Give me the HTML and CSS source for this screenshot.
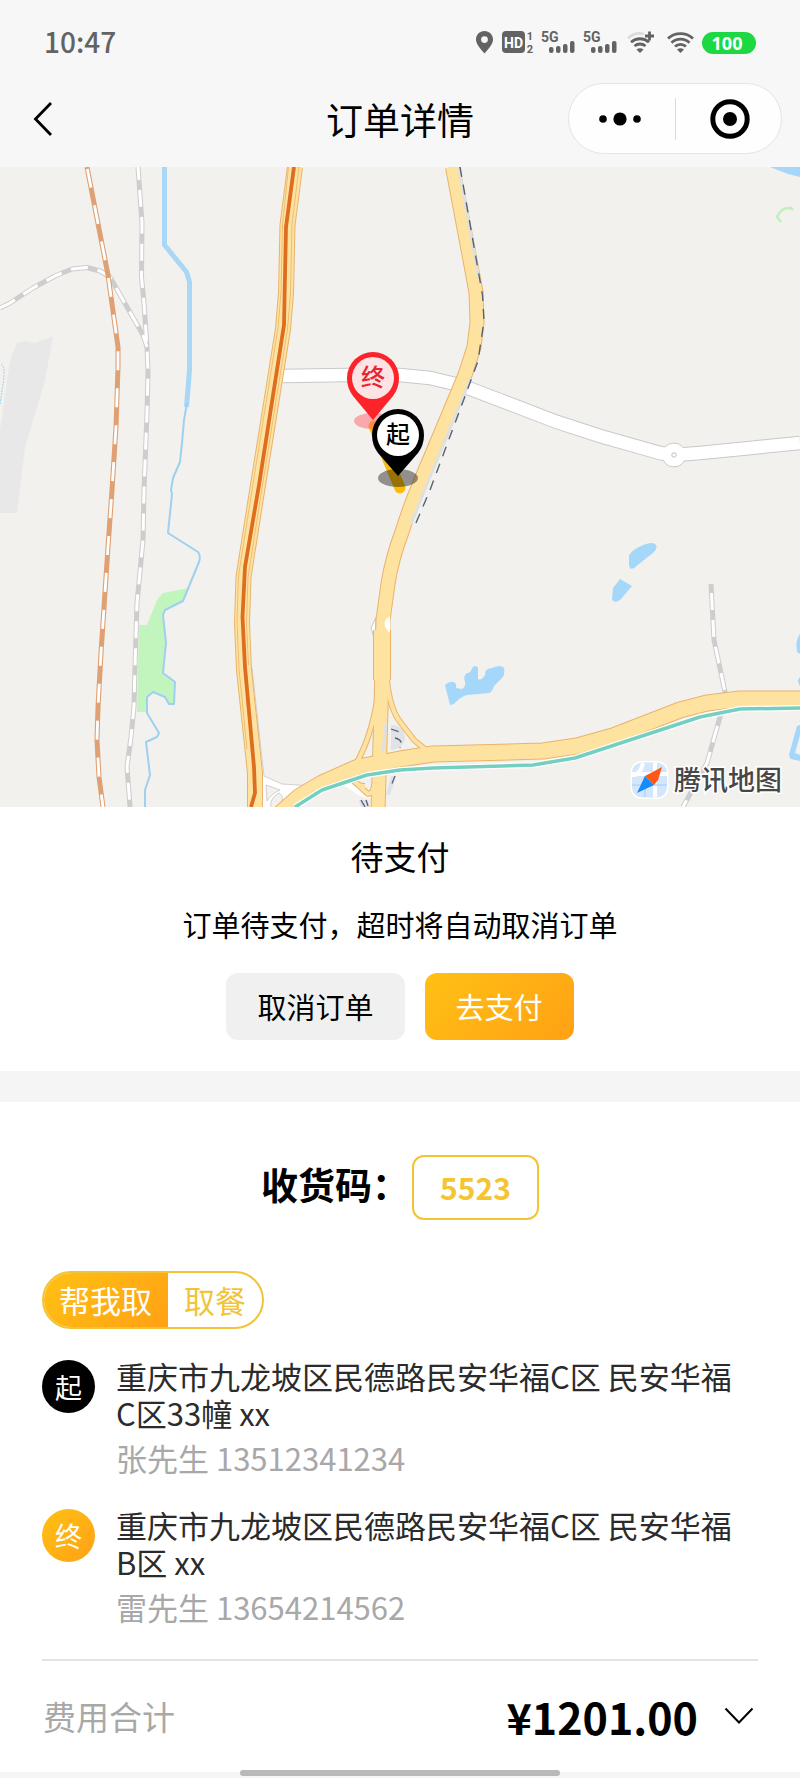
FILE: index.html
```
<!DOCTYPE html>
<html lang="zh-CN">
<head>
<meta charset="utf-8">
<meta name="viewport" content="width=device-width, initial-scale=1">
<title>订单详情</title>
<link rel="stylesheet" href="styles.css">
</head>
<body>
<div class="page">
  <div class="status-bar">
    <span class="clock">10:47</span>
    <svg class="status-icons" width="280" height="40" viewBox="476 23 280 40" aria-hidden="true">
      <g fill="#636363">
        <path fill-rule="evenodd" d="M484.500 31c-5 0-8.500 3.800-8.500 8.500 0 5 4.500 9 8.500 14 4-5 8.500-9 8.500-14 0-4.700-3.500-8.500-8.500-8.500zm0 5.200a3.400 3.400 0 1 1 0 6.800 3.400 3.400 0 0 1 0-6.800z"/>
        <rect x="502" y="31" width="23" height="22" rx="4"/>
        <text class="hd" x="513.500" y="47.500" text-anchor="middle">HD</text>
        <text class="sim" x="530" y="40" text-anchor="middle">1</text>
        <text class="sim" x="530" y="53" text-anchor="middle">2</text>
        <g id="signal">
          <text class="net" x="541" y="42">5G</text>
          <rect x="549" y="47" width="4.500" height="6" rx="2"/>
          <rect x="556" y="46" width="4.500" height="7" rx="2"/>
          <rect x="563" y="44" width="4.500" height="9" rx="2"/>
          <rect x="570" y="41" width="4.500" height="12" rx="2"/>
        </g>
        <use href="#signal" x="42"/>
      </g>
      <g fill="none" stroke="#636363" stroke-width="2.800">
        <path stroke="#dcdcdc" d="M628 38.500a17 17 0 0 1 16-4.500"/>
        <path d="M631 42.200a13.500 13.500 0 0 1 18 0M634.500 46a8.500 8.500 0 0 1 11 0M645 36h9M649.500 31.500v9"/>
        <path d="M668 38.500a18.500 18.500 0 0 1 25 0M671.500 42.700a13 13 0 0 1 18 0M675 46.500a8 8 0 0 1 11 0"/>
      </g>
      <path fill="#636363" d="M636.500 49.500q3.500-2.500 7 0l-3.500 3.500zM677 49.500q3.500-2.500 7 0l-3.500 3.500z"/>
      <rect x="702" y="32" width="54" height="22" rx="11" fill="#1cd842"/>
      <text class="battery" x="727" y="49.500" text-anchor="middle">100</text>
    </svg>
  </div>

  <header class="nav">
    <button class="back" aria-label="返回">
      <svg width="20" height="36" viewBox="0 0 20 36"><path d="M18 2 2.500 18 18 34" fill="none" stroke="#000" stroke-width="2.800"/></svg>
    </button>
    <h1 class="nav-title">订单详情</h1>
    <div class="capsule">
      <button class="capsule-btn" aria-label="更多">
        <svg width="44" height="16" viewBox="0 0 44 16"><circle cx="5" cy="8" r="3.800"/><circle cx="22" cy="8" r="6.600"/><circle cx="39" cy="8" r="3.800"/></svg>
      </button>
      <button class="capsule-btn" aria-label="关闭">
        <svg width="40" height="40" viewBox="0 0 40 40"><circle cx="20" cy="20" r="17.200" fill="none" stroke="#000" stroke-width="5"/><circle cx="20" cy="20" r="7"/></svg>
      </button>
    </div>
  </header>

  <svg class="map" viewBox="0 167 800 640" role="img" aria-label="配送路线地图">
    <rect y="167" width="800" height="640" fill="#f2f1ed"/>
    <path fill="#e9e8e9" d="M17 343l8-2 10 2 18-7-8 45-20 66-8 66H0v-83l10-70z"/>
    <path fill="#c2f4be" d="M189 588l-26 5-6 7-10 25h-8l-2 87h9l1-15 6-5 12 5 4 7h5l1-22-12-9 3-30-3-28 2-5 18-9z"/>
    <path fill="none" stroke="#a8d8f5" stroke-width="5" stroke-linejoin="round" d="M164.500 167v78l22 27 3 10v88l-3 37"/>
    <path fill="none" stroke="#9ed0f2" stroke-width="2" stroke-linejoin="round" d="M187 403l-3 17-2 23-2 19-7 16-2 12 1 4-4 39 30 19q3 4 1 10l-16 39-18 9-2 5 3 28-3 30 12 9-1 22h-5l-4-7-12-5-6 5v16l12 20-2 4-11 5 4 33-5 15v17"/>
    <path fill="none" stroke="#9ed0f2" stroke-dasharray="2 1" d="M1 364q5 4 2 20l-3 20"/>

    <g fill="none" stroke-linejoin="round">
      <g stroke="#cdcdcd" stroke-width="5">
        <path d="M0 308l10-5 23-15 22-12 17-7 15-1.500 13 3.500 10 6 13 23 20 35 4 12"/>
        <path d="M138 167l4 56-.5 54 2.500 26 3 44 1 26-1 40-3 77-1 50-6 63-2 64-1 40-3 30-4 30 3 40"/>
        <path d="M711 584l3 56 11 52-5 25-13 46-24 44"/>
      </g>
      <g stroke="#fff" stroke-width="3" stroke-dasharray="17 10">
        <path d="M0 308l10-5 23-15 22-12 17-7 15-1.500 13 3.500 10 6 13 23 20 35 4 12"/>
        <path stroke-dashoffset="4" d="M138 167l4 56-.5 54 2.500 26 3 44 1 26-1 40-3 77-1 50-6 63-2 64-1 40-3 30-4 30 3 40"/>
        <path stroke-dashoffset="18" d="M711 584l3 56 11 52-5 25-13 46-24 44"/>
      </g>
      <path stroke="#dfa073" stroke-width="5" d="M87 167l21 108 10 72v20l-2 60-4 63-4 57-7 106-3 54-1 33 2 37 4 30"/>
      <path stroke="#fff" stroke-width="2.800" stroke-dasharray="19 18" stroke-dashoffset="-2" d="M87 167l21 108 10 72v20l-2 60-4 63-4 57-7 106-3 54-1 33 2 37 4 30"/>
    </g>

    <g fill="#a5d7fb">
      <path d="M770 167h30v10l-12-3z"/>
      <path d="M629 557q0-5 10-10 14-7 17-2 3 4-7 11l-15 12q-5 3-5-5z"/>
      <path d="M613 588l7-9 12 7-11 13q-5 5-9 1z"/>
      <path d="M445 685q4-4 9-3 3 2 2 6l6 1q4-2 3-7-2-6 2-9 4 0 5-5 4-4 6 0v11q3 2 7-4 0-7 7-7 9-4 12 0 2 7-4 12l-6 6q-2 6-5 7l-22 2q-7 2-13 9l-4 1z"/>
      <path d="M800 634q-5 6-3 18l3 2zM800 677q-4 3 0 9zM797 726l3-1v10l-5 18 5 2v6l-9-2q-3-2-1-8z"/>
    </g>
    <path fill="none" stroke="#c2efc0" stroke-width="2.500" d="M781 222l-4-5q4-10 14-9l2 2"/>

    <path fill="none" stroke="#c9c9c9" stroke-width="14.500" d="M282 376l65-1h53l30 3 25 6 13 4 89 34 43 14 60 17 14 2 26-2 100-10"/>
    <circle cx="674" cy="455" r="12" fill="#fff" stroke="#c9c9c9"/>
    <path fill="none" stroke="#fff" stroke-width="12.500" d="M282 376l65-1h53l30 3 25 6 13 4 89 34 43 14 60 17 14 2 26-2 100-10"/>
    <circle cx="674" cy="455" r="2.200" fill="#fff" stroke="#bbb"/>

    <path fill="#fff" stroke="#d2d0d0" d="M249 668l3 0 12 108 18 8 32 2-28 24h-36z"/>
    <path fill="#f2f1ed" stroke="#d2d0d0" d="M266 785l14 5q-8 3-13 11zM271 808q-2-9 8-15 6 4 2 10l-5 5z"/>
    <path fill="#fff" stroke="#c9c9c9" d="M376 617l-5 11 4 13z"/>
    <path fill="none" stroke="#fff" stroke-width="6" d="M345 782l14 10q9 5 20 3"/>
    <path fill="#dfe2e6" d="M391 725q14 0 14 14-2 10-14 11zM391 776h5l-6 19h-4zM359 800h9l2 7h-9z"/>

    <g fill="none" stroke-linejoin="round">
      <g stroke="#e9b36c">
        <path stroke-width="16" d="M295 167l-7.500 58-1.500 68-3 36-25 156-14.500 92-1.500 46 2 47 11 103v36"/>
        <path stroke-width="15" d="M452.500 167l23.500 125 1 31-3 24-9 28-44 105q-12 29-19 52-10 26-14 52l-5 36-2 90-3 100"/>
        <path stroke-width="18" d="M382 630v50"/>
        <path stroke-width="17" d="M275 818l25-22 22-13 36-16 42-8 33-5 110-3 34-5 36-10 67-26 27-7 33-4h70"/>
        <path stroke-width="6" d="M377 700q-6 37-20 62M387 680q3 30 14 43l13 17 17 14M353 780l15 14q6-1 6-10M353 780q4 6 12 6"/>
      </g>
      <g stroke="#fee3a0">
        <path stroke-width="14" d="M295 167l-7.500 58-1.500 68-3 36-25 156-14.500 92-1.500 46 2 47 11 103v36"/>
        <path stroke-width="13" d="M452.500 167l23.500 125 1 31-3 24-9 28-44 105q-12 29-19 52-10 26-14 52l-5 36-2 90-3 100"/>
        <path stroke-width="16" d="M382 630v50"/>
        <path stroke-width="15" d="M275 818l25-22 22-13 36-16 42-8 33-5 110-3 34-5 36-10 67-26 27-7 33-4h70"/>
        <path stroke-width="4" d="M377 700q-6 37-20 62M387 680q3 30 14 43l13 17 17 14M353 780l15 14q6-1 6-10M353 780q4 6 12 6"/>
      </g>
      <path stroke="#dfe1df" stroke-width="3" d="M459 169l20 110M471 378l-48 116-12 30M386 723l-3 28"/>
      <path fill="#fff" stroke="none" d="M390 616q-11 7 0 17z"/>
      <path stroke="#e9b36c" stroke-width=".8" d="M288.500 167l-6 58-1.500 67-3 36-25 156-14.500 92-1.500 46 2 47 8 80M299 167l-7 58-1.500 68-3 36-25 156-14.500 92-1.500 46 2 42"/>
      <path stroke="#596275" stroke-width="1.400" stroke-dasharray="10 8" d="M460 167l22.500 128 1.500 26-6 40-14 38-34 91-17 40"/>
      <path stroke="#dd6d20" stroke-width="3.800" d="M294 167l-8 60-2 98-25 160-14 82-2.500 50 2.500 50 9 100 1 26-4 14"/>
      <path stroke="#596275" stroke-width="1.300" stroke-dasharray="8 5" d="M391 729l9 3M395 738q9 2 5 10M395 776l-4 10M361 800l4 7M366 800l2 6"/>
      <path stroke="#fff" stroke-width="6" d="M295 807l27-17 45-15 33-5 33-2 100-3 42-7 125-41 40-8 60-1"/>
      <path stroke="#75cfc0" stroke-width="3.500" d="M295 807l27-17 45-15 33-5 33-2 100-3 42-7 125-41 40-8 60-1"/>
      <path stroke="#f8bd0b" stroke-width="11" stroke-linecap="round" d="M374 426l26 62"/>
    </g>

    <ellipse cx="373" cy="421" rx="19" ry="8" fill="#ff5f6c" opacity=".5"/>
    <path fill="#fc232b" d="M373 420l-20-24q-6-8-6-18a26 26 0 0 1 52 0q0 10-6 18z"/>
    <circle cx="373" cy="378" r="21" fill="#fde3e4"/>
    <text class="pin" x="373" y="386" text-anchor="middle" fill="#e5262e">终</text>
    <ellipse cx="398" cy="478" rx="20" ry="9" opacity=".4"/>
    <path d="M398 476l-20-23q-6-8-6-18a26 26 0 0 1 52 0q0 10-6 18z"/>
    <circle cx="398" cy="435" r="21" fill="#fff"/>
    <text class="pin" x="398" y="443" text-anchor="middle">起</text>

    <rect x="630.500" y="761" width="38" height="38" rx="11" fill="#fff"/>
    <rect x="632" y="762.500" width="35" height="35" rx="10" fill="#d3e6fc"/>
    <path fill="none" stroke="#fff" stroke-width="4" d="M632 775q8 1 11-12M655 762.500v35M632 774h35"/>
    <path fill="none" stroke="#b4d5fa" stroke-width="1.500" d="M632 785h35M645 776v21"/>
    <path fill="#ff5719" d="M662 767l-17 9 9 9 4-5z"/>
    <path fill="#138cf7" d="M637 793l8-17 9 9z"/>
    <text class="map-brand" x="674" y="790">腾讯地图</text>
  </svg>

  <main>
    <section class="pay">
      <h2 class="pay-title">待支付</h2>
      <p class="pay-tip">订单待支付，超时将自动取消订单</p>
      <div class="pay-actions">
        <button class="btn btn-plain">取消订单</button>
        <button class="btn btn-primary">去支付</button>
      </div>
    </section>

    <section class="order">
      <div class="code-row">
        <span class="code-label">收货码：</span>
        <span class="code">5523</span>
      </div>
      <div class="tags"><span class="tag tag-fill">帮我取</span><span class="tag">取餐</span></div>
      <div class="stop">
        <span class="dot dot-start">起</span>
        <div class="stop-body">
          <p class="address">重庆市九龙坡区民德路民安华福C区 民安华福C区33幢 xx</p>
          <p class="contact">张先生 13512341234</p>
        </div>
      </div>
      <div class="stop">
        <span class="dot dot-end">终</span>
        <div class="stop-body">
          <p class="address">重庆市九龙坡区民德路民安华福C区 民安华福B区 xx</p>
          <p class="contact">雷先生 13654214562</p>
        </div>
      </div>
      <div class="total">
        <span class="total-label">费用合计</span>
        <button class="total-btn" aria-label="展开费用明细">
          <span>¥1201.00</span>
          <svg width="30" height="18" viewBox="0 0 30 18"><path d="M1.500 1.500 15 15.500 28.500 1.500" fill="none" stroke="#000" stroke-width="2"/></svg>
        </button>
      </div>
    </section>
  </main>
  <footer class="home"><div class="home-bar"></div></footer>
</div>
</body>
</html>
```

FILE: styles.css
```
* {
  box-sizing: border-box;
}

body,
h1,
h2,
p {
  margin: 0;
}

body {
  background: #f7f7f7;
  color: #000;
  font-family: "Noto Sans CJK SC", sans-serif;
}

button {
  padding: 0;
  border: 0;
  background: none;
  color: inherit;
  font: inherit;
  cursor: pointer;
}

svg {
  display: block;
}

.status-bar {
  display: flex;
  align-items: center;
  justify-content: space-between;
  height: 70px;
  padding: 15px 44px 0;
}

.clock {
  padding-bottom: 4px;
  color: #636363;
  font-size: 28px;
  font-weight: 500;
  line-height: 32px;
}

.hd {
  fill: #fff;
  font-family: Roboto, sans-serif;
  font-size: 14px;
  font-weight: 700;
}

.sim {
  font-family: Roboto, sans-serif;
  font-size: 11px;
  font-weight: 700;
}

.net {
  font-family: Roboto, sans-serif;
  font-size: 14px;
  font-weight: 700;
}

.battery {
  fill: #fff;
  font-family: "Noto Sans", sans-serif;
  font-size: 18px;
  font-weight: 700;
}

.nav {
  display: grid;
  grid-template-columns: 1fr auto 1fr;
  align-items: center;
  height: 97px;
  padding: 0 18px 0 33px;
}

.back {
  justify-self: start;
}

.nav-title {
  margin-left: -15px;
  font-size: 37px;
  font-weight: 400;
  line-height: 48px;
}

.capsule {
  display: flex;
  justify-self: end;
  align-items: center;
  width: 214px;
  height: 71px;
  border: 1px solid #e4e4e4;
  border-radius: 36px;
  background: #fefefe;
}

.capsule-btn {
  display: flex;
  flex: 1;
  align-items: center;
  justify-content: center;
  height: 42px;
  padding-right: 3px;
}

.capsule-btn + .capsule-btn {
  padding: 0 0 0 3px;
  border-left: 1px solid #dcdcdc;
}

.map {
  width: 100%;
  height: auto;
}

.pin {
  font-size: 24px;
  font-weight: 500;
}

.map-brand {
  fill: #474747;
  stroke: #fff;
  stroke-width: 3px;
  paint-order: stroke;
  font-size: 27px;
  font-weight: 500;
}

.pay {
  padding: 27px 42px 31px;
  border-bottom: 31px solid #f5f5f5;
  background: #fff;
  text-align: center;
}

.pay-title {
  font-size: 33px;
  font-weight: 400;
  line-height: 44px;
}

.pay-tip {
  margin-top: 26px;
  font-size: 29px;
  line-height: 40px;
}

.pay-actions {
  display: flex;
  justify-content: center;
  gap: 20px;
  margin-top: 29px;
}

.btn {
  height: 67px;
  padding: 0 31px 2px;
  border-radius: 12px;
  font-size: 29px;
}

.btn-plain {
  background: #f0f0f0;
}

.btn-primary,
.tag-fill,
.dot-end {
  background: linear-gradient(135deg, #ffc114, #ffa114);
  color: #fff;
}

.order {
  padding: 53px 42px 0;
  background: #fff;
}

.code-row {
  display: flex;
  align-items: center;
  justify-content: center;
  gap: 3px;
}

.code-label {
  padding-bottom: 8px;
  font-size: 37px;
  font-weight: 700;
  line-height: 48px;
}

.code {
  padding: 0 26px;
  border: 2px solid #f1c438;
  border-radius: 12px;
  color: #f5c431;
  font-size: 30px;
  font-weight: 700;
  line-height: 61px;
}

.tags {
  display: flex;
  width: fit-content;
  margin-top: 51px;
  overflow: hidden;
  border: 2px solid #f1c438;
  border-radius: 29px;
}

.tag {
  padding: 0 16px;
  color: #f1c438;
  font-size: 31px;
  line-height: 54px;
}

.tag-fill {
  padding-left: 15px;
  color: #fff;
}

.stop {
  display: flex;
  gap: 21px;
  margin-top: 28px;
}

.dot {
  flex: none;
  width: 53px;
  height: 53px;
  margin-top: 3px;
  border-radius: 50%;
  font-size: 27px;
  line-height: 53px;
  text-align: center;
}

.dot-start {
  background: #000;
  color: #fff;
}

.stop-body {
  flex: 1;
  min-width: 0;
  padding-right: 16px;
}

.address {
  color: #2b2b2b;
  font-size: 31px;
  line-height: 37px;
}

.contact {
  margin-top: 7px;
  color: #a8a8a8;
  font-size: 31px;
  line-height: 40px;
}

.total {
  display: flex;
  align-items: center;
  justify-content: space-between;
  height: 111px;
  margin-top: 32px;
  padding: 0 4px 0 1px;
  border-top: 2px solid #e4e4e4;
}

.total-label {
  color: #a8a8a8;
  font-size: 33px;
}

.total-btn {
  display: flex;
  align-items: center;
  gap: 26px;
  font-size: 43px;
  font-weight: 700;
  line-height: 60px;
}

.home {
  padding-bottom: 2px;
  background: linear-gradient(#fff 2px, #f5f5f5 2px);
}

.home-bar {
  width: 40%;
  height: 6px;
  margin: 0 auto;
  border-radius: 3px;
  background: #b9b9b9;
}
```
